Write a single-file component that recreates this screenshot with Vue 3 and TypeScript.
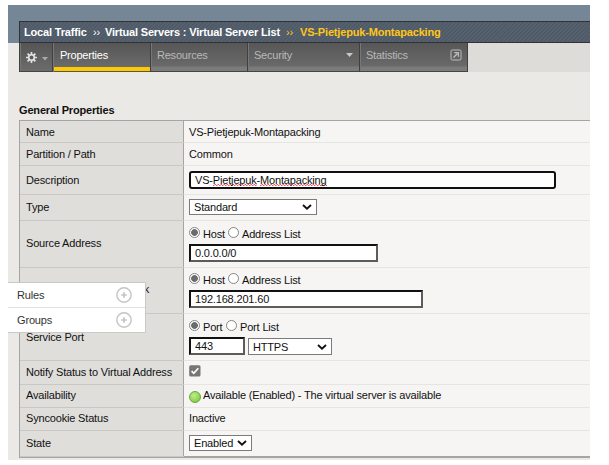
<script setup lang="ts">
import { ref } from 'vue'

interface AddressRow {
  id: string
  label: string
  first: string
  second: string
  value: string
}

const source: AddressRow = { id: 'source', label: 'Source Address', first: 'Host', second: 'Address List', value: '0.0.0.0/0' }
const destination: AddressRow = { id: 'dest', label: 'Destination Address/Mask', first: 'Host', second: 'Address List', value: '192.168.201.60' }
const addressRows = [source, destination]
const menu = ['Rules', 'Groups']
const port = ref('443')
</script>

<template>
  <div class="page">
    <header class="top">
      <nav class="crumbs">
        <span class="c1">Local Traffic</span><span class="sep s1">››</span><span class="c2">Virtual Servers : Virtual Server List</span><span class="sep gold s2">››</span><span class="gold c3">VS-Pietjepuk-Montapacking</span>
      </nav>
    </header>
    <div class="tabbar">
      <div class="tab gear">
        <svg width="11" height="11" viewBox="0 0 11 11">
          <g stroke="#e4e4e4" stroke-width="1.7">
            <path d="M5.5 0V11M0 5.5H11M1.6 1.6L9.4 9.4M9.4 1.6L1.6 9.4" />
          </g>
          <circle cx="5.5" cy="5.5" r="3.5" fill="#e4e4e4" />
          <circle cx="5.5" cy="5.5" r="1.9" fill="#5c5c5c" />
        </svg>
        <svg class="caret" width="6" height="4" viewBox="0 0 6 4"><path d="M0 0H6L3 3.5Z" fill="#aaa" /></svg>
      </div>
      <div class="tab props active"><span>Properties</span></div>
      <div class="tab res"><span>Resources</span></div>
      <div class="tab sec">
        <span>Security</span>
        <svg width="7" height="4" viewBox="0 0 7 4"><path d="M0 0H7L3.5 4Z" fill="#c8c8c8" /></svg>
      </div>
      <div class="tab stat">
        <span>Statistics</span>
        <svg width="12" height="12" viewBox="0 0 12 12" fill="none" stroke="#bdbdbd">
          <rect x="1" y="1" width="10" height="10" rx="1.2" />
          <path d="M3.5 8.5L7.5 4.5" stroke-width="1.4" />
          <path d="M4.2 3.6H8.4V7.8" stroke-width="1.3" />
        </svg>
      </div>
    </div>

    <h2>General Properties</h2>
    <div class="table">
      <div class="row r-name">
        <div class="label"><span>Name</span></div>
        <div class="value"><span>VS-Pietjepuk-Montapacking</span></div>
      </div>
      <div class="row r-part">
        <div class="label"><span>Partition / Path</span></div>
        <div class="value"><span>Common</span></div>
      </div>
      <div class="row r-desc">
        <div class="label"><span>Description</span></div>
        <div class="value">
          <div class="desc" contenteditable="true" spellcheck="false">VS-<span class="typo">Pietjepuk</span>-<span class="typo">Montapacking</span></div>
        </div>
      </div>
      <div class="row up r-type">
        <div class="label"><span>Type</span></div>
        <div class="value">
          <div class="select w-type"><span>Standard</span><svg width="10" height="6" viewBox="0 0 10 6"><path d="M1 1L5 4.6L9 1" /></svg></div>
        </div>
      </div>
      <div v-for="r in addressRows" :key="r.id" class="row up" :class="'r-' + r.id">
        <div class="label"><span>{{ r.label }}</span></div>
        <div class="value stack">
          <div class="radios">
            <i class="radio on"></i><span class="first">{{ r.first }}</span><i class="radio"></i><span>{{ r.second }}</span>
          </div>
          <input class="box" :value="r.value" />
        </div>
      </div>
      <div class="row r-port">
        <div class="label"><span>Service Port</span></div>
        <div class="value stack">
          <div class="radios">
            <i class="radio on"></i><span class="first port">Port</span><i class="radio"></i><span>Port List</span>
          </div>
          <div class="ports">
            <input v-model="port" class="box" />
            <div class="select w-port"><span>HTTPS</span><svg width="10" height="6" viewBox="0 0 10 6"><path d="M1 1L5 4.6L9 1" /></svg></div>
          </div>
        </div>
      </div>
      <div class="row up r-notify">
        <div class="label"><span>Notify Status to Virtual Address</span></div>
        <div class="value">
          <svg class="check" width="12" height="12" viewBox="0 0 12 12"><rect x=".2" y=".2" width="11.3" height="11.3" rx="1.5" fill="#767676" /><path d="M2.6 6.1L4.8 8.3L9.3 3.3" fill="none" stroke="#fff" stroke-width="1.7" /></svg>
        </div>
      </div>
      <div class="row up r-avail">
        <div class="label"><span>Availability</span></div>
        <div class="value"><i class="ball"></i><span class="avail">Available (Enabled) - The virtual server is available</span></div>
      </div>
      <div class="row up r-sync">
        <div class="label"><span>Syncookie Status</span></div>
        <div class="value"><span>Inactive</span></div>
      </div>
      <div class="row up r-state">
        <div class="label"><span>State</span></div>
        <div class="value">
          <div class="select w-state"><span>Enabled</span><svg width="10" height="6" viewBox="0 0 10 6"><path d="M1 1L5 4.6L9 1" /></svg></div>
        </div>
      </div>
    </div>

    <div class="flyout">
      <div v-for="m in menu" :key="m" class="item">
        <span>{{ m }}</span>
        <svg width="16" height="16" viewBox="0 0 16 16" fill="none" stroke="#c4c4c4"><circle cx="8" cy="8" r="7.2" stroke-width="1.4" /><path d="M8 5.2V10.8M5.2 8H10.8" stroke-width="1.7" /></svg>
      </div>
    </div>
  </div>
</template>

<style>
body { background: #fff; }
</style>

<style scoped>
* { box-sizing: border-box; }
.page { position: relative; width: 582px; height: 455px; margin: 5px 0 0 8px; background: #eae9e5; font: 11px/14px "Liberation Sans", Arial, sans-serif; letter-spacing: -0.17px; color: #111; white-space: nowrap; overflow: hidden; }
.top { height: 38px; padding: 16px 0 0 11px; background: #758697; }
.crumbs { display: flex; align-items: center; height: 22px; border: solid #303236; border-width: 1px 0 1px 1px; padding: 0 0 1px 4px; font-weight: bold; color: #fff; background: repeating-linear-gradient(135deg, #4f5a66 0 1.4px, #55616e 1.4px 2.8px); }
.c1 { width: 62px; }
.c2 { width: 175px; }
.sep { font-size: 11px; font-weight: normal; }
.s1 { width: 12px; margin-left: 7px; }
.s2 { width: 14px; margin-left: 6px; }
.gold { color: #ffc61a; }
.tabbar { display: flex; height: 29px; margin-left: 11px; background: #dddcd8; }
.tab { display: flex; height: 29px; padding: 5px 6px 0 6px; color: #b9b9b9; border-right: 1px solid #404040; border-bottom: 1px solid #454545; background: linear-gradient(#575757, #696969 23px, #7b7b7b 24px, #7b7b7b); box-shadow: inset 1px 0 #777; justify-content: space-between; letter-spacing: -0.22px; }
.gear { width: 34px; padding: 9px 4px 0 6px; background: linear-gradient(#555, #6c6c6c); border-left: 1px solid #404040; }
.caret { margin-top: 5px; }
.props { width: 98px; padding-left: 7px; color: #fff; }
.active { border-bottom: 0; background: linear-gradient(#565656, #6b6b6b 24px, #ffc800 24px, #ffc800 28px, #555 28px); }
.res { width: 97px; }
.sec { width: 112px; }
.sec svg { margin: 5px 0 0; }
.stat { width: 108px; padding-right: 5px; }
.stat svg { margin-top: 1px; }
h2 { margin: 31px 0 0 11px; height: 17px; font-size: 11px; line-height: 14px; font-weight: bold; }
.table { margin-left: 11px; border: solid #a5a5a3; border-width: 1px 0 2px 1px; }
.row { display: flex; border-bottom: 1px solid #e5e5e2; background: #f6f5f3; }
.label { display: flex; align-items: center; width: 164px; padding-left: 6px; border-right: 1px solid #a5a5a3; background: #dfdedb; box-shadow: 0 1px #c9c8c5; }
.up .label { padding-bottom: 2px; }
.value { display: flex; align-items: center; flex: 1; padding-left: 5px; }
.r-name { height: 22px; }
.r-part { height: 23px; }
.r-desc { height: 29px; }
.r-type { height: 26px; }
.r-type .value { padding-bottom: 1px; }
.r-source { height: 47px; }
.r-dest { height: 46px; }
.r-dest .label { padding-bottom: 4px; }
.r-port { height: 47px; }
.r-notify { height: 24px; }
.r-notify .value { padding-bottom: 4px; }
.r-avail { height: 23px; }
.r-sync { height: 23px; }
.r-sync .value, .r-avail .value { padding-bottom: 2px; }
.r-state { height: 25px; border-bottom: 0; }
.r-state .value { padding-bottom: 1px; }
.desc { width: 367px; height: 18px; padding-left: 4px; border: 2px solid #101010; border-radius: 3px; background: #fff; outline: 0; }
.typo { background: repeating-linear-gradient(90deg, #f0525a 0 1px, #f8b4b4 1px 2px, #fff 2px 3px) left bottom / 100% 1px no-repeat, repeating-linear-gradient(90deg, #fff 0 1px, #f8b4b4 1px 2px, #f0525a 2px 3px) left calc(100% - 1px) / 100% 1px no-repeat; }
.select { display: flex; align-items: center; justify-content: space-between; height: 16px; border: 1px solid #7b7b7b; background: #fff; padding: 0 4px; }
.select path { fill: none; stroke: #111; stroke-width: 1.9; }
.w-type { width: 128px; }
.w-port { width: 84px; }
.w-state { width: 63px; }
.stack { flex-direction: column; align-items: flex-start; }
.radios { display: flex; align-items: center; height: 14px; margin-top: 6px; }
.r-dest .radios { margin-top: 5px; }
.first { width: 25px; }
.port { width: 23px; }
.radio { width: 11px; height: 11px; margin: 0 3px 3px 0; border: 1px solid #858585; border-radius: 50%; background: #fff; }
.on { background: radial-gradient(circle, #6b6b6b 0 3px, #fff 3.7px); }
.box { width: 189px; height: 18px; margin-top: 3px; padding: 0 0 0 4px; border: 2px solid #111; border-right-color: #5c5c5c; border-bottom-color: #5c5c5c; background: #fff; font: inherit; letter-spacing: inherit; color: inherit; outline: 0; }
.r-dest .box { width: 234px; }
.ports { display: flex; gap: 3px; }
.ports .box { width: 56px; }
.ports .select { margin-top: 4px; height: 17px; }
.ball { width: 12px; height: 12px; margin: 3px 2px 0 0; border: 1px solid #66a83a; border-radius: 50%; background: radial-gradient(circle at 40% 35%, #c2ec8a, #83cc45 80%); }
.flyout { position: absolute; left: 0; top: 277px; width: 138px; height: 51px; border: solid #c9c9c9; border-width: 1px 1px 1px 0; background: #fff; color: #333; }
.item { display: flex; align-items: center; justify-content: space-between; height: 24px; padding: 0 13px 0 9px; }
.item + .item { height: 25px; border-top: 1px solid #e2e2e2; }
</style>
